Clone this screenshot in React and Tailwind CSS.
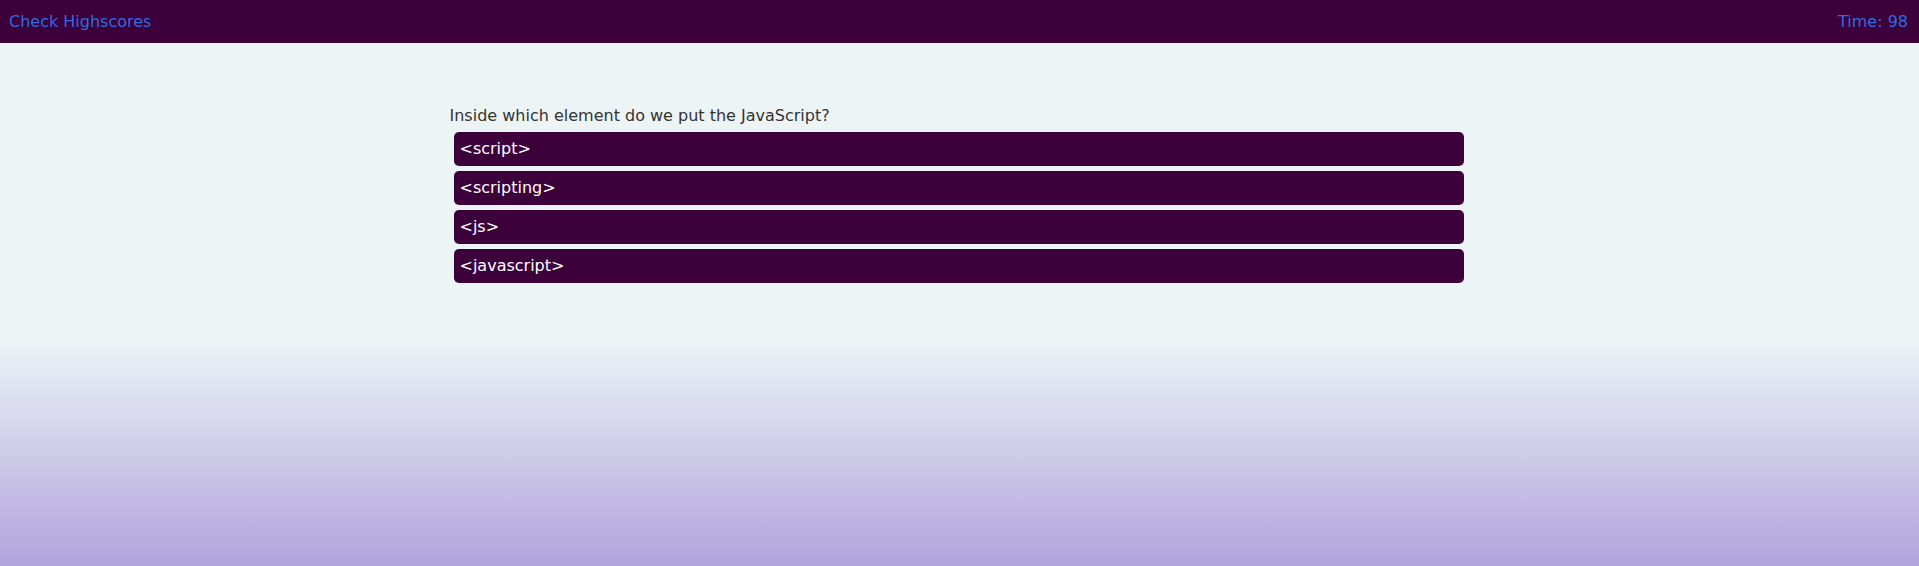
import React from 'react';

const choices = ['<script>', '<scripting>', '<js>', '<javascript>'];

const App = () => {
  return (
    <div className="min-h-screen flex flex-col bg-[linear-gradient(to_bottom,#ecf4f6_60%,#b1a3dc_100%)] font-['DejaVu_Sans',sans-serif]">
      {/* Top bar */}
      <header className="h-[43px] flex items-center justify-between px-[9px] bg-[#3c003a] text-[#2f6be0] text-[16px]">
        <a href="#">Check Highscores</a>
        <span className="pr-[2px]">Time: 98</span>
      </header>

      {/* Quiz */}
      <main className="w-[1020px] mx-auto pt-[63px]">
        <p className="text-[16px] leading-[20px] text-[#333]">Inside which element do we put the JavaScript?</p>
        <div className="flex flex-col gap-[5px] mt-[6px] pl-[4px] pr-[6px]">
          {choices.map((c) => (
            <button
              key={c}
              className="h-[34px] rounded-[5px] bg-[#3c003a] text-white text-left px-[6px] text-[16px]"
            >
              {c}
            </button>
          ))}
        </div>
      </main>
    </div>
  );
};

export default App;
